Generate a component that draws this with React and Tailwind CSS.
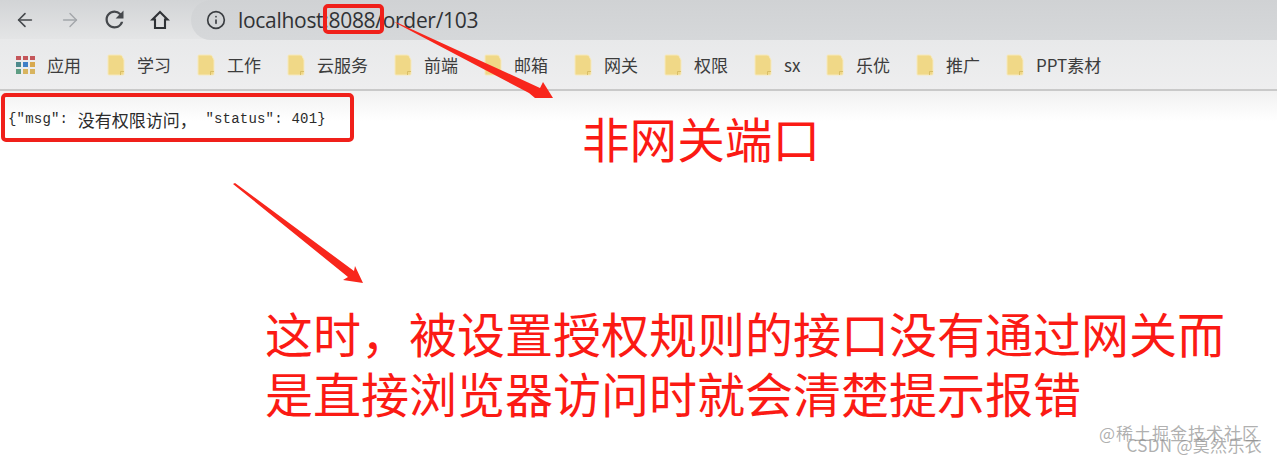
import { ArrowLeft, ArrowRight, Info } from 'lucide-react'

const bookmarks = [
  { label: '学习', width: 'w-[34px]' },
  { label: '工作', width: 'w-[34px]' },
  { label: '云服务', width: 'w-[51px]' },
  { label: '前端', width: 'w-[34px]' },
  { label: '邮箱', width: 'w-[34px]' },
  { label: '网关', width: 'w-[34px]' },
  { label: '权限', width: 'w-[34px]' },
  { label: 'sx', width: 'w-[16px]' },
  { label: '乐优', width: 'w-[34px]' },
  { label: '推广', width: 'w-[34px]' },
  { label: 'PPT素材', width: 'w-[64px]' },
]

const appColors = [
  'bg-[#c4565a]', 'bg-[#c4565a]', 'bg-[#c4565a]',
  'bg-[#4d8a8c]', 'bg-[#3f7fc6]', 'bg-[#d8a94f]',
  'bg-[#5f9e84]', 'bg-[#d8b45f]', 'bg-[#d8b45f]',
]

function FolderIcon() {
  return (
    <svg width="18" height="22" viewBox="0 0 18 22" className="shrink-0">
      <path d="M1 2Q1 1 2 1H13Q15 1 15.500 3L17 6V20Q17 21 16 21H2Q1 21 1 20Z" fill="#f0d887" stroke="#f6e9bd" strokeWidth="1" />
      <path d="M13.500 21V17.500H17" fill="none" stroke="#d6bb62" strokeWidth="0.9" />
    </svg>
  )
}

function AppsIcon() {
  return (
    <div className="grid h-[18px] w-[19px] grid-cols-3 gap-[2px]">
      {appColors.map((color, index) => (
        <span key={index} className={color} />
      ))}
    </div>
  )
}

function ReloadIcon() {
  return (
    <svg width="27" height="27" viewBox="0 0 24 24" className="ml-[20px] shrink-0" fill="#45484c">
      <path d="M17.650 6.350A7.958 7.958 0 0 0 12 4c-4.420 0-7.990 3.580-7.990 8s3.570 8 7.990 8c3.730 0 6.840-2.550 7.730-6h-2.080A5.990 5.990 0 0 1 12 18c-3.310 0-6-2.690-6-6s2.690-6 6-6c1.660 0 3.140.690 4.220 1.780L13 11h7V4l-2.350 2.350z" />
    </svg>
  )
}

function HomeIcon() {
  return (
    <svg width="20" height="20" viewBox="0 0 20 20" className="ml-[22px] shrink-0" fill="none" stroke="#2f3236" strokeWidth="2.100" strokeLinejoin="miter">
      <path d="M10 2L2.500 9.500H5V18H15V9.500H17.500Z" />
    </svg>
  )
}

function Toolbar() {
  return (
    <div className="flex h-[39px] items-center bg-gradient-to-b from-[#d2d4d6] to-[#e4e5e6]">
      <ArrowLeft className="ml-[14px] text-[#45484c]" size={22} strokeWidth={1.700} />
      <ArrowRight className="ml-[23px] text-[#a3a6aa]" size={22} strokeWidth={1.500} />
      <ReloadIcon />
      <HomeIcon />
      <div className="ml-[21px] flex h-[40px] w-[1086px] items-center self-start rounded-l-[20px] bg-gradient-to-b from-[#d0d2d4] to-[#d6d8da] pl-[15px]">
        <Info className="text-[#3a3d41]" size={20} strokeWidth={2} />
        <span className="ml-[12px] font-['Open_Sans','Liberation_Sans',sans-serif] text-[21px] leading-none tracking-[-0.3px] text-[#303235]">
          localhost:8088/order/103
        </span>
      </div>
    </div>
  )
}

function BookmarkBar() {
  return (
    <div className="flex h-[52px] items-center border-b-2 border-[#c9c9c9] bg-gradient-to-b from-[#e8e9ea] to-[#eeeeef] pl-[16px] pt-[1px] font-['Noto_Sans_CJK_SC','Noto_Sans',sans-serif] text-[17px] text-[#3c3c3c]">
      <AppsIcon />
      <span className="ml-[12px] mr-[26px] w-[34px] whitespace-nowrap">应用</span>
      {bookmarks.map((bookmark) => (
        <div key={bookmark.label} className="mr-[26px] flex items-center gap-[12px]">
          <FolderIcon />
          <span className={`${bookmark.width} whitespace-nowrap`}>{bookmark.label}</span>
        </div>
      ))}
    </div>
  )
}

function Annotations() {
  return (
    <>
      <div className="absolute left-[323px] top-[4px] h-[30px] w-[61px] rounded-[5px] border-[4px] border-[#f0201a]" />
      <svg className="absolute left-0 top-0" width="1277" height="460" viewBox="0 0 1277 460">
        <polygon points="394,22 398,23 540,88 543,82 553,98 535,98 529,93" fill="#f8261c" />
        <polygon points="233,184 235,183 354,271 355,266 363,283 343,280 348,277" fill="#f8261c" />
      </svg>
      <div className="absolute bottom-[19px] right-[17px] font-['Noto_Sans_CJK_SC',sans-serif] text-[17px] leading-none tracking-[1px] text-[#8d8d8d]/70">
        @稀土掘金技术社区
      </div>
      <div className="absolute bottom-[7px] right-[15px] font-['Noto_Sans_CJK_SC',sans-serif] text-[17px] leading-none tracking-[0.3px] text-[#8d8d8d]/70">
        CSDN @莫然乐衣
      </div>
    </>
  )
}

export default function App() {
  return (
    <div className="relative h-[460px] w-[1277px] overflow-hidden bg-white">
      <Toolbar />
      <BookmarkBar />
      <div className="bg-gradient-to-b from-[#f1f1f1] to-white to-[30px] pl-[1px] pt-[2px] font-['Noto_Sans_CJK_SC',sans-serif] text-[#fb1a14]">
        <div className="flex items-start">
          <div className="flex h-[49px] w-[353px] items-center whitespace-pre rounded-[5px] border-[4px] border-[#f0201a] pl-[3px] pt-[4px] font-['Liberation_Mono','Noto_Sans_CJK_SC',monospace] text-[14px] tracking-[0.2px] text-[#2b2b2b]">
            {'{″msg″: '}
            <span className="ml-[1px] font-['Noto_Sans_CJK_SC',sans-serif] text-[17px] tracking-normal">没有权限访问，</span>
            {' ″status″: 401}'}
          </div>
          <div className="ml-[228px] mt-[15px] text-[47.6px] leading-[60px]">非网关端口</div>
        </div>
        <div className="ml-[264px] mt-[134px] whitespace-nowrap text-[48px] leading-[60px]">
          <div>这时，被设置授权规则的接口没有通过网关而</div>
          <div>是直接浏览器访问时就会清楚提示报错</div>
        </div>
      </div>
      <Annotations />
    </div>
  )
}
